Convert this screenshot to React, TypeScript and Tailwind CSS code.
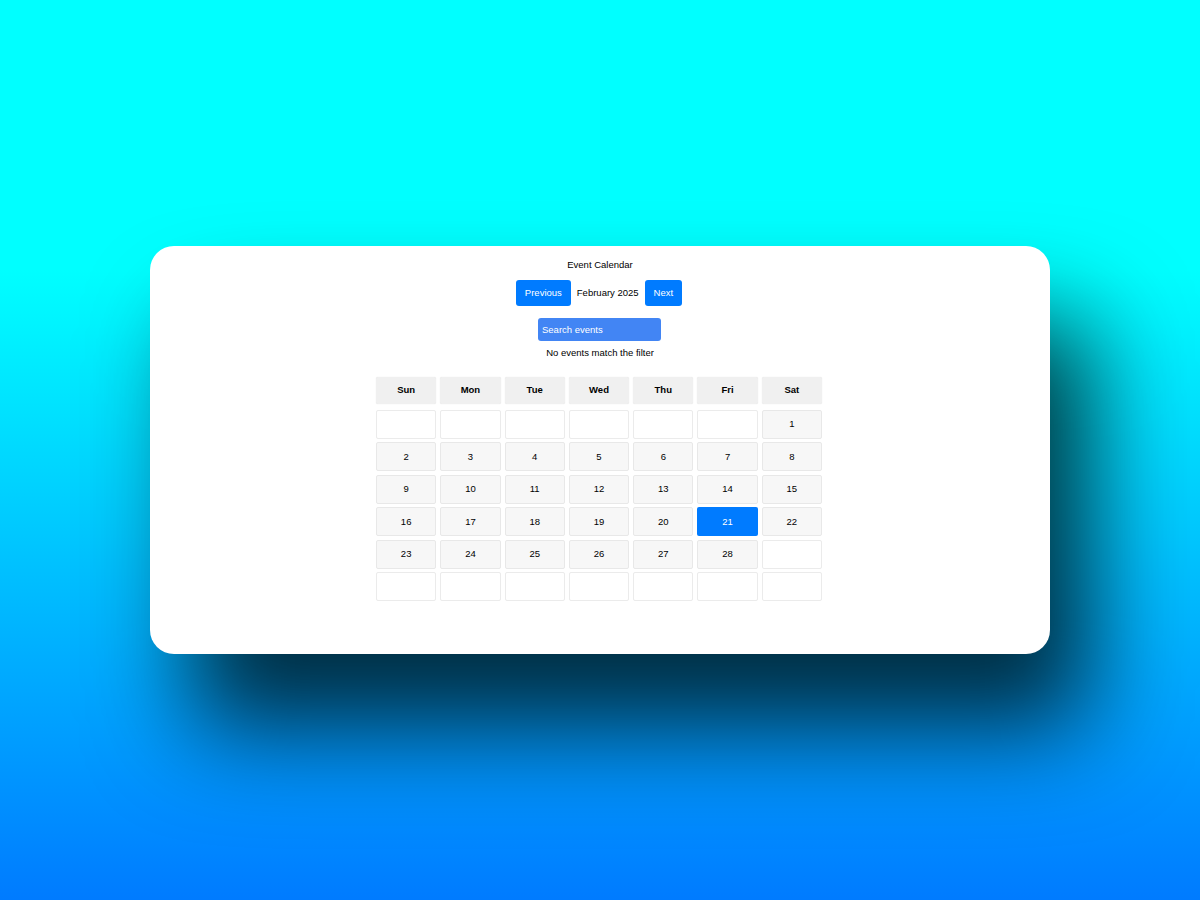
import React from 'react'

const DAYS = ['Sun', 'Mon', 'Tue', 'Wed', 'Thu', 'Fri', 'Sat']

// February 2025 starts on a Saturday, 6 rows total
const CELLS: (number | null)[] = [
  ...Array(6).fill(null),
  ...Array.from({ length: 28 }, (_, i) => i + 1),
]
while (CELLS.length < 42) CELLS.push(null)

const SELECTED = 21

export default function App() {
  return (
    <div
      className="w-full h-[900px] flex items-center justify-center bg-[linear-gradient(180deg,#00ffff_30%,#007bff_100%)]"
      style={{ fontFamily: '"Liberation Sans", Arial, sans-serif' }}
    >
      <div className="w-[900px] h-[408px] bg-white rounded-[24px] shadow-[40px_75px_100px_rgba(0,0,0,0.75)] flex flex-col items-center pt-[13px] text-[9.5px] text-black">
        <div className="h-[12px] leading-[12px]">Event Calendar</div>

        {/* Month nav */}
        <div className="flex items-center gap-[6px] mt-[9px] mr-[2px]">
          <button className="h-[26px] px-[9px] rounded-[3px] bg-[#007bff] text-white">Previous</button>
          <span>February 2025</span>
          <button className="h-[26px] px-[9px] rounded-[3px] bg-[#007bff] text-white">Next</button>
        </div>

        {/* Search */}
        <input
          placeholder="Search events"
          className="mt-[12px] mr-[1px] w-[123px] h-[23px] px-[4px] rounded-[3px] bg-[#4285f4] text-white placeholder:text-white outline-none"
        />
        <div className="mt-[6px] leading-[12px]">No events match the filter</div>

        {/* Grid */}
        <div className="mt-[18px] mr-[2px] w-[446px] grid grid-cols-7 gap-x-[4px]">
          {DAYS.map(d => (
            <div
              key={d}
              className="h-[27px] flex items-center justify-center font-bold bg-[#f0f0f0] rounded-[2px] shadow-[0_0_1px_rgba(0,0,0,0.15)]"
            >
              {d}
            </div>
          ))}
        </div>
        <div className="mt-[6px] mr-[2px] w-[446px] grid grid-cols-7 gap-x-[4px] gap-y-[3.4px]">
          {CELLS.map((n, i) => {
            const sel = n === SELECTED
            return (
              <div
                key={i}
                className={
                  sel
                    ? 'h-[29px] flex items-center justify-center rounded-[2px] bg-[#007bff] text-white'
                    : n
                    ? 'h-[29px] flex items-center justify-center rounded-[2px] bg-[#f7f7f7] border border-[#e8e8e8]'
                    : 'h-[29px] rounded-[2px] bg-white border border-[#ebebeb]'
                }
              >
                {n ?? ''}
              </div>
            )
          })}
        </div>
      </div>
    </div>
  )
}
